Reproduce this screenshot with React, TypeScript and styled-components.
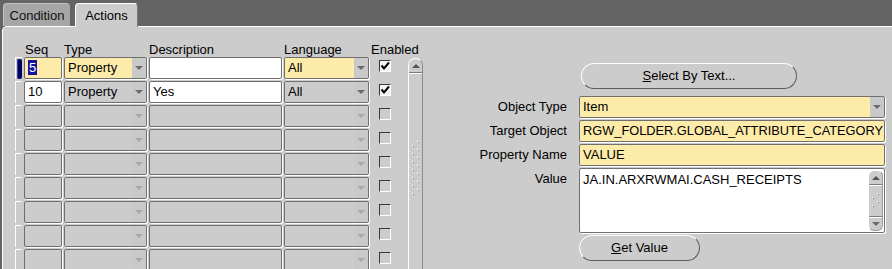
import React from 'react';
import styled, { createGlobalStyle, css } from 'styled-components';

// #region styles

const GlobalStyle = createGlobalStyle`
  body {
    margin: 0;
    font-family: "Liberation Sans", Arial, sans-serif;
    font-size: 13px;
    color: #000;
  }
`;

const YELLOW = '#fdebaa';
const PANEL = '#cccccc';

const Screen = styled.div`
  width: 892px;
  height: 269px;
  background: #646464;
  display: flex;
  flex-direction: column;
  overflow: hidden;
`;

const TabStrip = styled.div`
  display: flex;
  align-items: flex-start;
  gap: 5px;
  height: 23px;
  padding: 3px 0 0 3px;
`;

const Tab = styled.div<{ $active?: boolean; $width: number }>`
  width: ${(p) => p.$width}px;
  box-sizing: border-box;
  height: ${(p) => (p.$active ? 24 : 23)}px;
  padding-top: 4px;
  line-height: 15px;
  text-align: center;
  border-radius: 4px 4px 0 0;
  ${(p) =>
    p.$active
      ? css`
          background: ${PANEL};
          border-top: 1px solid #fff;
          border-left: 1px solid #fff;
          border-right: 1px solid #7a7a7a;
          position: relative;
          z-index: 1;
        `
      : css`
          background: #a6a6a6;
          border-top: 1px solid #c2c2c2;
          border-left: 1px solid #c2c2c2;
          color: #111;
        `}
`;

const Panel = styled.div`
  flex: 1;
  min-height: 0;
  margin-left: 2px;
  background: ${PANEL};
  border-top: 1px solid #fff;
  border-left: 1px solid #fff;
  border-top-left-radius: 5px;
  display: flex;
  overflow: hidden;
`;

const GridBlock = styled.div`
  display: flex;
  padding: 15px 0 0 12px;
`;

const Table = styled.div`
  display: flex;
  flex-direction: column;
`;

const HeaderRow = styled.div`
  display: flex;
  align-items: flex-end;
  gap: 2px;
  height: 17px;
  padding-left: 9px;
`;

const HeaderCell = styled.div<{ $width: number; $indent?: number }>`
  width: ${(p) => p.$width}px;
  padding-left: ${(p) => p.$indent ?? 0}px;
  box-sizing: border-box;
  line-height: 15px;
  white-space: nowrap;
`;

const Rows = styled.div`
  display: flex;
  flex-direction: column;
  gap: 2px;
`;

const Row = styled.div`
  display: flex;
  gap: 2px;
  height: 22px;
`;

const Indicator = styled.div<{ $current?: boolean }>`
  width: 7px;
  box-sizing: border-box;
  border-left: 1px solid #fff;
  border-top: 1px solid #fff;
  border-top-left-radius: 1px;
  padding: 1px 0 0 1px;
`;

const IndicatorBar = styled.div`
  width: 5px;
  height: 20px;
  background: #00005e;
  border-radius: 2px;
  box-shadow: inset 1px 0 0 #3a3a9a;
`;

const Field = styled.div<{ $width: number; $height?: number; $bg: string }>`
  width: ${(p) => p.$width}px;
  height: ${(p) => p.$height ?? 22}px;
  box-sizing: border-box;
  border: 1px solid #6f6f6f;
  border-radius: 2px;
  box-shadow: 1px 1px 0 #fff;
  background: ${(p) => p.$bg};
  display: flex;
  overflow: hidden;
  white-space: nowrap;
  line-height: 20px;
`;

const FieldText = styled.div<{ $bg?: string }>`
  flex: 1;
  padding-left: 3px;
  background: ${(p) => p.$bg ?? 'transparent'};
  overflow: hidden;
`;

const ArrowPart = styled.div`
  width: 14px;
  background: #c9c9c9;
  display: flex;
  align-items: center;
  justify-content: center;
`;

const DownArrow = styled.div<{ $dim?: boolean }>`
  width: 0;
  height: 0;
  border-left: 4px solid transparent;
  border-right: 4px solid transparent;
  border-top: 4px solid ${(p) => (p.$dim ? '#a9a9a9' : '#6a6a6a')};
`;

const UpArrow = styled.div`
  width: 0;
  height: 0;
  border-left: 4px solid transparent;
  border-right: 4px solid transparent;
  border-bottom: 4px solid #555;
`;

const Selected = styled.span`
  background: #1414a0;
  color: #fff;
  padding: 0 1px;
`;

const CheckCell = styled.div`
  width: 30px;
  box-sizing: border-box;
  padding: 3px 0 0 8px;
`;

const CheckBox = styled.div<{ $checked?: boolean }>`
  width: 12px;
  height: 12px;
  box-sizing: border-box;
  border-top: 1px solid #3a3a3a;
  border-left: 1px solid #3a3a3a;
  border-bottom: 1px solid #fff;
  border-right: 1px solid #fff;
  background: ${(p) => (p.$checked ? '#f4f4f4' : 'transparent')};
  display: flex;
  align-items: center;
  justify-content: center;
`;

const ScrollTrack = styled.div`
  width: 15px;
  margin: 16px 0 0 7px;
  box-sizing: border-box;
  border-left: 1px solid #fff;
  border-right: 1px solid #8c8c8c;
  border-top: 1px solid #fff;
  border-radius: 7px 7px 0 0;
  display: flex;
  flex-direction: column;
  align-items: center;
`;

const ScrollButton = styled.div<{ $bottom?: boolean }>`
  width: 100%;
  height: 14px;
  box-sizing: border-box;
  display: flex;
  align-items: center;
  justify-content: center;
  ${(p) =>
    p.$bottom
      ? css`
          border-top: 1px solid #7a7a7a;
          box-shadow: inset 0 1px 0 #fff;
          margin-top: auto;
        `
      : css`
          border-bottom: 1px solid #7a7a7a;
          box-shadow: 0 1px 0 #fff;
        `}
`;

const GripWrap = styled.div<{ $top: number }>`
  margin-top: ${(p) => p.$top}px;
  line-height: 0;
`;

const RightBlock = styled.div`
  margin-left: 37px;
  padding-top: 36px;
  display: flex;
  flex-direction: column;
  gap: 2px;
`;

const FormRow = styled.div<{ $gapAfter?: number }>`
  display: grid;
  grid-template-columns: 107px 306px;
  column-gap: 12px;
  align-items: start;
  margin-bottom: ${(p) => p.$gapAfter ?? 0}px;
`;

const Label = styled.div`
  text-align: right;
  line-height: 22px;
  white-space: nowrap;
`;

const PillButton = styled.div<{ $width: number; $shift?: number }>`
  width: ${(p) => p.$width}px;
  height: 26px;
  margin-left: ${(p) => p.$shift ?? 0}px;
  box-sizing: border-box;
  border: 1px solid;
  border-color: #fff #5c5c5c #5c5c5c #fff;
  border-radius: 13px;
  background: ${PANEL};
  text-align: center;
  line-height: 23px;
`;

const ValueText = styled.div`
  flex: 1;
  padding: 3px 3px;
  line-height: 15px;
`;

const InnerScroll = styled.div`
  width: 15px;
  margin: 1px 1px 1px 0;
  box-sizing: border-box;
  border: 1px solid #9a9a9a;
  border-top-color: #fff;
  border-left-color: #fff;
  border-radius: 6px;
  background: ${PANEL};
  display: flex;
  flex-direction: column;
  align-items: center;
`;

// #endregion styles

const CheckMark = () => (
  <svg width="10" height="10" viewBox="0 0 10 10">
    <path d="M1.5 4.5 L4 7.5 L9 1.5" fill="none" stroke="#000" strokeWidth="2" />
  </svg>
);

// 縦スクロールバーのつまみの点
const Grip = (props: { count: number }) => {
  const dots = [];
  for (let i = 0; i < props.count; i++) {
    dots.push(
      <g key={i}>
        <rect x={5} y={i * 8} width={1} height={1} fill="#fff" />
        <rect x={6} y={i * 8 + 1} width={1} height={1} fill="#8a8a8a" />
        <rect x={0} y={i * 8 + 4} width={1} height={1} fill="#fff" />
        <rect x={1} y={i * 8 + 5} width={1} height={1} fill="#8a8a8a" />
      </g>
    );
  }
  return (
    <svg width="8" height={props.count * 8} viewBox={`0 0 8 ${props.count * 8}`}>
      {dots}
    </svg>
  );
};

type ActionRow = {
  seq?: React.ReactNode;
  type?: string;
  description?: string;
  language?: string;
  enabled?: boolean;
  current?: boolean;
};

const rows: ActionRow[] = [
  { seq: <Selected>5</Selected>, type: 'Property', description: '', language: 'All', enabled: true, current: true },
  { seq: '10', type: 'Property', description: 'Yes', language: 'All', enabled: true },
  {},
  {},
  {},
  {},
  {},
  {},
  {},
];

const Combo = (props: { width: number; text?: string; bg: string; dim?: boolean }) => (
  <Field $width={props.width} $bg={PANEL}>
    <FieldText $bg={props.bg}>{props.text}</FieldText>
    <ArrowPart>
      <DownArrow $dim={props.dim} />
    </ArrowPart>
  </Field>
);

const ActionGridRow = (props: { row: ActionRow }) => {
  const r = props.row;
  const filled = r.type != undefined;
  const textBg = filled ? (r.current ? YELLOW : '#fff') : PANEL;
  const comboBg = filled ? (r.current ? YELLOW : PANEL) : PANEL;
  return (
    <Row>
      <Indicator>{r.current && <IndicatorBar />}</Indicator>
      <Field $width={38} $bg={textBg}>
        <FieldText>{r.seq}</FieldText>
      </Field>
      <Combo width={83} text={r.type} bg={comboBg} dim={!filled} />
      <Field $width={133} $bg={filled ? '#fff' : PANEL}>
        <FieldText>{r.description}</FieldText>
      </Field>
      <Combo width={85} text={r.language} bg={comboBg} dim={!filled} />
      <CheckCell>
        <CheckBox $checked={r.enabled}>{r.enabled && <CheckMark />}</CheckBox>
      </CheckCell>
    </Row>
  );
};

export default function App() {
  return (
    <>
      <GlobalStyle />
      <Screen>
        <TabStrip>
          <Tab $width={67}>Condition</Tab>
          <Tab $width={63} $active>
            Actions
          </Tab>
        </TabStrip>
        <Panel>
          <GridBlock>
            <Table>
              <HeaderRow>
                <HeaderCell $width={38} $indent={1}>
                  Seq
                </HeaderCell>
                <HeaderCell $width={83}>Type</HeaderCell>
                <HeaderCell $width={133}>Description</HeaderCell>
                <HeaderCell $width={85}>Language</HeaderCell>
                <HeaderCell $width={30}>Enabled</HeaderCell>
              </HeaderRow>
              <Rows>
                {rows.map((r, k) => (
                  <ActionGridRow key={'row' + k.toString()} row={r} />
                ))}
              </Rows>
            </Table>
            <ScrollTrack>
              <ScrollButton>
                <UpArrow />
              </ScrollButton>
              <GripWrap $top={68}>
                <Grip count={7} />
              </GripWrap>
            </ScrollTrack>
          </GridBlock>
          <RightBlock>
            <FormRow $gapAfter={5}>
              <span />
              <PillButton $width={216} $shift={2}>
                <u>S</u>elect By Text...
              </PillButton>
            </FormRow>
            <FormRow>
              <Label>Object Type</Label>
              <Combo width={306} text="Item" bg={YELLOW} />
            </FormRow>
            <FormRow>
              <Label>Target Object</Label>
              <Field $width={306} $bg={YELLOW}>
                <FieldText style={{ fontSize: '12.8px' }}>RGW_FOLDER.GLOBAL_ATTRIBUTE_CATEGORY</FieldText>
              </Field>
            </FormRow>
            <FormRow>
              <Label>Property Name</Label>
              <Field $width={306} $bg={YELLOW}>
                <FieldText>VALUE</FieldText>
              </Field>
            </FormRow>
            <FormRow>
              <Label>Value</Label>
              <Field $width={306} $height={65} $bg="#fff">
                <ValueText>JA.IN.ARXRWMAI.CASH_RECEIPTS</ValueText>
                <InnerScroll>
                  <ScrollButton>
                    <UpArrow />
                  </ScrollButton>
                  <GripWrap $top={8}>
                    <Grip count={2} />
                  </GripWrap>
                  <ScrollButton $bottom>
                    <DownArrow />
                  </ScrollButton>
                </InnerScroll>
              </Field>
            </FormRow>
            <FormRow>
              <span />
              <PillButton $width={121}>
                <u>G</u>et Value
              </PillButton>
            </FormRow>
          </RightBlock>
        </Panel>
      </Screen>
    </>
  );
}
